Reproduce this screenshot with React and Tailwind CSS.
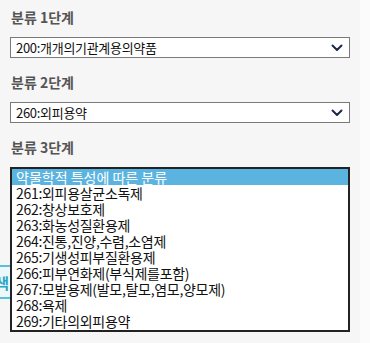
const steps = [
  { label: '분류 1단계', value: '200:개개의기관계용의약품' },
  { label: '분류 2단계', value: '260:외피용약' },
]

const options = [
  '261:외피용살균소독제',
  '262:창상보호제',
  '263:화농성질환용제',
  '264:진통,진양,수렴,소염제',
  '265:기생성피부질환용제',
  '266:피부연화제(부식제를포함)',
  '267:모발용제(발모,탈모,염모,양모제)',
  '268:욕제',
  '269:기타의외피용약',
]

function Chevron(){
  return (
    <svg width="12" height="8" viewBox="0 0 12 8" fill="none">
      <path d="M1.5 1.5 L6 6 L10.5 1.5" stroke="#1c2a48" strokeWidth="2" strokeLinecap="round" strokeLinejoin="round" />
    </svg>
  )
}

export default function App(){
  return (
    <div className="relative flex w-[370px] h-[343px] overflow-hidden" style={{fontFamily: '"Noto Sans CJK KR", "Noto Sans", sans-serif'}}>
      {/* search button sitting behind the open list */}
      <div className="absolute left-[-30px] top-[265px] w-[40px] h-[34px] border-y-2 border-[#5bc0de] bg-[#eef8fb] flex items-center justify-end pr-[1px] text-[15px] font-bold text-[#2aa6c4] leading-none">
        색
      </div>
      <div className="w-[360px] bg-[#f6f6f6] px-[10px] pt-[7px]">
        {steps.map((s) => (
          <div key={s.label} className="h-[65px]">
            <div className="h-[20px] leading-[20px] text-[14px] font-bold text-[#555] pl-[1px]">{s.label}</div>
            <div className="mt-[10px] h-[21px] w-[340px] border border-[#7a7a7a] bg-white flex items-center justify-between pl-[5px] pr-[6px]">
              <span className="text-[13px] leading-none text-[#111] tracking-[-0.3px]">{s.value}</span>
              <Chevron />
            </div>
          </div>
        ))}
        <div className="h-[20px] leading-[20px] text-[14px] font-bold text-[#555] pl-[1px]">분류 3단계</div>
        <div className="relative z-10 mt-[10px] w-[340px] border-2 border-[#222] bg-white pb-[1px]">
          <div className="h-[16px] leading-[16px] bg-[#5bb4e0] text-white text-[14px] pl-[4px]">약물학적 특성에 따른 분류</div>
          {options.map((o) => (
            <div key={o} className="h-[16px] leading-[16px] text-[14px] text-[#111] pl-[4px] tracking-[-0.3px]">{o}</div>
          ))}
        </div>
      </div>
      <div className="flex-1 bg-[#fbfbfb]" />
    </div>
  )
}
